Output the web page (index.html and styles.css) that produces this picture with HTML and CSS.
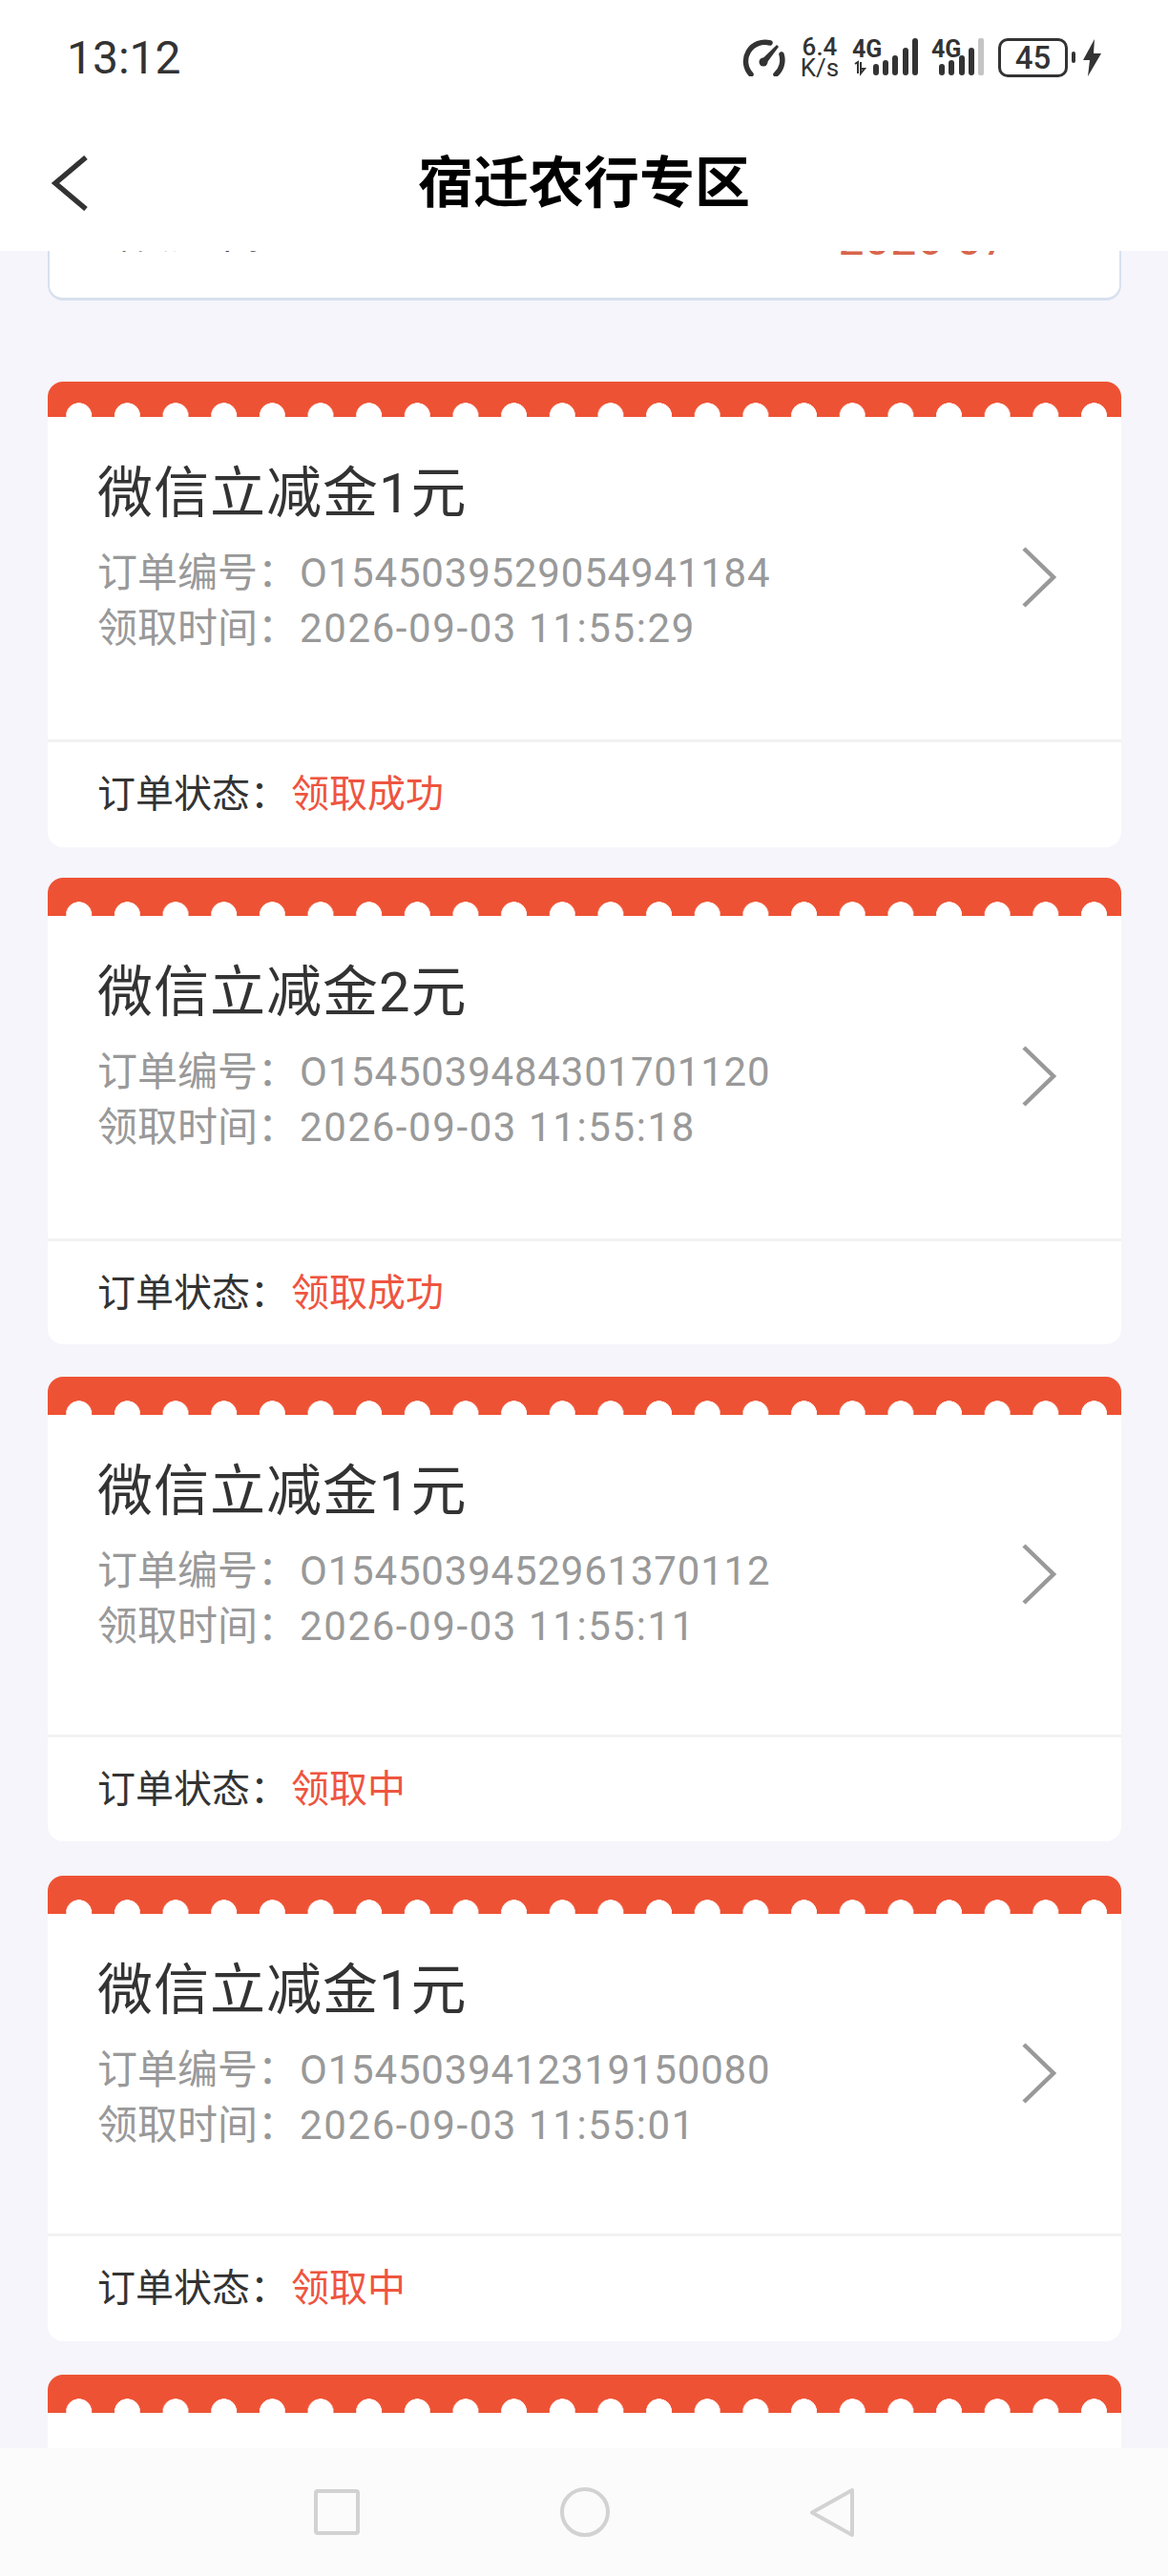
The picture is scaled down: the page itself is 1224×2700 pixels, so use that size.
FILE: index.html
```html
<!DOCTYPE html>
<html lang="zh-CN">
<head>
<meta charset="utf-8">
<title>宿迁农行专区</title>
<link rel="stylesheet" href="styles.css">
</head>
<body>
<div class="screen">
  <header class="topbar">
    <div class="status">
      <span class="time">13:12</span>
      <div class="status-icons">
        <svg class="ic-gauge" width="46" height="40" viewBox="0 0 46 40"><path d="M9 38A20 20 0 0 1 29 5M41 17A20 20 0 0 1 35 38" fill="none" stroke="#333" stroke-width="5.500" stroke-linecap="round"/><circle cx="22" cy="25" r="4.500" fill="#333"/><path d="M19.500 23 36 7l2 2-14 19z" fill="#333"/></svg>
        <div class="speed"><span class="speed-num">6.4</span><span class="speed-unit">K/s</span></div>
        <svg class="ic-sig1" width="70" height="40" viewBox="0 0 70 40"><text x="0" y="20" class="net">4G</text><path d="M3 27l3-2v12M9 25v12l4-5h-4" fill="none" stroke="#333" stroke-width="2"/><g fill="#333"><rect x="22" y="27" width="6" height="12" rx="3"/><rect x="32" y="23" width="6" height="16" rx="3"/><rect x="42" y="18" width="6" height="21" rx="3"/><rect x="53" y="10" width="6" height="29" rx="3"/><rect x="63" y="0" width="6" height="39" rx="3"/></g></svg>
        <svg class="ic-sig2" width="56" height="40" viewBox="0 0 56 40"><text x="0" y="20" class="net">4G</text><g fill="#333"><rect x="8" y="27" width="6" height="12" rx="3"/><rect x="18" y="23" width="6" height="16" rx="3"/><rect x="29" y="18" width="6" height="21" rx="3"/><rect x="39" y="10" width="6" height="29" rx="3"/></g><rect x="49" y="0" width="6" height="39" rx="2" fill="#c4c4c4"/></svg>
        <div class="battery"><span class="battery-body">45</span><span class="battery-nub"></span></div>
        <svg class="ic-bolt" width="19" height="39" viewBox="0 0 19 39"><path d="M12 0 0 22h7L5 39 19 15h-8z" fill="#333"/></svg>
      </div>
    </div>
    <div class="navbar">
      <svg class="back" width="40" height="58" viewBox="0 0 40 58"><path d="M36 2 4 29l32 27" fill="none" stroke="#333" stroke-width="5.500"/></svg>
      <h1 class="title">宿迁农行专区</h1>
    </div>
  </header>

  <main class="list">
    <section class="summary">
      <span class="summary-label">活动时间</span>
      <span class="summary-value">2026-07</span>
    </section>

    <article class="card card-1">
      <div class="ribbon"></div>
      <div class="card-body">
        <div class="info">
          <h2 class="name">微信立减金1元</h2>
          <p class="meta">订单编号：<span class="num">O1545039529054941184</span></p>
          <p class="meta">领取时间：<span class="date">2026-09-03 11:55:29</span></p>
        </div>
        <svg class="chev" width="38" height="64" viewBox="0 0 38 64"><path d="M3 2l31 30L3 62" fill="none" stroke="#999" stroke-width="4.500"/></svg>
      </div>
      <div class="card-foot">订单状态：<span class="state">领取成功</span></div>
    </article>

    <article class="card card-2">
      <div class="ribbon"></div>
      <div class="card-body">
        <div class="info">
          <h2 class="name">微信立减金2元</h2>
          <p class="meta">订单编号：<span class="num">O1545039484301701120</span></p>
          <p class="meta">领取时间：<span class="date">2026-09-03 11:55:18</span></p>
        </div>
        <svg class="chev" width="38" height="64" viewBox="0 0 38 64"><path d="M3 2l31 30L3 62" fill="none" stroke="#999" stroke-width="4.500"/></svg>
      </div>
      <div class="card-foot">订单状态：<span class="state">领取成功</span></div>
    </article>

    <article class="card card-3">
      <div class="ribbon"></div>
      <div class="card-body">
        <div class="info">
          <h2 class="name">微信立减金1元</h2>
          <p class="meta">订单编号：<span class="num">O1545039452961370112</span></p>
          <p class="meta">领取时间：<span class="date">2026-09-03 11:55:11</span></p>
        </div>
        <svg class="chev" width="38" height="64" viewBox="0 0 38 64"><path d="M3 2l31 30L3 62" fill="none" stroke="#999" stroke-width="4.500"/></svg>
      </div>
      <div class="card-foot">订单状态：<span class="state">领取中</span></div>
    </article>

    <article class="card card-4">
      <div class="ribbon"></div>
      <div class="card-body">
        <div class="info">
          <h2 class="name">微信立减金1元</h2>
          <p class="meta">订单编号：<span class="num">O1545039412319150080</span></p>
          <p class="meta">领取时间：<span class="date">2026-09-03 11:55:01</span></p>
        </div>
        <svg class="chev" width="38" height="64" viewBox="0 0 38 64"><path d="M3 2l31 30L3 62" fill="none" stroke="#999" stroke-width="4.500"/></svg>
      </div>
      <div class="card-foot">订单状态：<span class="state">领取中</span></div>
    </article>

    <article class="card card-5">
      <div class="ribbon"></div>
      <div class="card-body"></div>
    </article>
  </main>

  <nav class="sysnav">
    <svg width="48" height="48" viewBox="0 0 48 48"><rect x="2" y="2" width="44" height="44" rx="2" fill="none" stroke="#d2d2d2" stroke-width="4"/></svg>
    <svg width="52" height="52" viewBox="0 0 52 52"><circle cx="26" cy="26" r="24" fill="none" stroke="#d2d2d2" stroke-width="4"/></svg>
    <svg width="46" height="53" viewBox="0 0 46 53"><path d="M44 3v47L2 26.500z" fill="none" stroke="#d2d2d2" stroke-width="4" stroke-linejoin="round"/></svg>
  </nav>
</div>
</body>
</html>
```
FILE: styles.css
```css
* { box-sizing: border-box; }
html, body { margin: 0; padding: 0; }
body {
  width: 1224px;
  height: 2700px;
  overflow: hidden;
  font-family: Roboto, "Noto Sans CJK SC", sans-serif;
  color: #333;
}
.screen {
  width: 1224px;
  height: 2700px;
  display: flex;
  flex-direction: column;
  background: #f5f5fb;
}

/* top bar */
.topbar { flex: none; height: 263px; background: #fff; }
.status {
  height: 120px;
  padding: 2px 70px 0;
  display: flex;
  align-items: center;
  justify-content: space-between;
}
.time { font-size: 48px; line-height: 1; color: #333; }
.status-icons { display: flex; align-items: center; margin-top: -2px; }
.speed {
  width: 38px;
  margin: 0 15px 0 16px;
  display: flex;
  flex-direction: column;
  align-items: center;
  line-height: 22px;
  color: #333;
}
.speed-num { font-size: 26px; font-weight: 500; }
.speed-unit { font-size: 26px; white-space: nowrap; }
.ic-sig1, .ic-sig2 { overflow: visible; }
.net { font-family: Roboto, sans-serif; font-size: 25px; font-weight: 700; fill: #333; }
.ic-sig2 { margin-left: 13px; }
.battery { margin: 0 8px 0 14px; display: flex; align-items: center; gap: 4px; }
.battery-body {
  width: 73px;
  height: 41px;
  border: 3.500px solid #333;
  border-radius: 10px;
  display: flex;
  align-items: center;
  justify-content: center;
  font-size: 33px;
  font-weight: 500;
  line-height: 1;
}
.battery-nub { width: 4px; height: 12px; background: #333; border-radius: 2px; }

.navbar {
  height: 143px;
  padding-left: 54px;
  display: flex;
  align-items: center;
  position: relative;
}
.title {
  position: absolute;
  left: 0;
  right: 0;
  margin: 0;
  text-align: center;
  font-size: 58px;
  font-weight: 700;
  color: #000;
  line-height: 1;
}

/* scrolled list */
.list { flex: 1; min-height: 0; overflow: hidden; }
.summary {
  height: 112px;
  margin: -60px 49px 0 50px;
  padding: 14px 116px 0 61px;
  background: #fff;
  border: 2px solid #d8e0ee;
  border-bottom-width: 3px;
  border-radius: 16px;
  display: flex;
  justify-content: space-between;
  font-size: 40px;
  line-height: 56px;
  color: #444;
}
.summary-value { color: #d8654c; font-size: 48px; letter-spacing: 0.500px; margin-top: 4px; }

.card {
  margin: 0 49px 0 50px;
  background: #fff;
  border-radius: 16px;
  overflow: hidden;
}
.ribbon {
  height: 40px;
  background-color: #ee5234;
  background-image: radial-gradient(circle 13.700px at 25.330px 13.700px, #fff 13.200px, transparent 13.700px);
  background-size: 50.667px 28px;
  background-repeat: repeat-x;
  background-position: 7.400px 25px;
}
.card-body {
  padding: 38px 32px 0 52px;
  display: flex;
  align-items: center;
  justify-content: space-between;
}
.info { align-self: flex-start; }
.name { margin: 0 0 13px; font-size: 58px; font-weight: 400; line-height: 84px; letter-spacing: 1px; color: #333; }
.meta { margin: 0; font-size: 42px; line-height: 58px; color: #999; white-space: nowrap; }
.num { letter-spacing: 0.800px; margin-left: 2px; }
.date { letter-spacing: 1.600px; margin-left: 2px; }
.chev { flex: none; margin-top: -40px; margin-right: 35px; }
.card-foot {
  padding-left: 52px;
  border-top: 3px solid #f2f2f4;
  font-size: 40px;
  line-height: 56px;
  padding-top: 27px;
  color: #333;
}
.state { color: #ee5540; margin-left: 3px; }

.card-1 { margin-top: 85px; }
.card-1 .ribbon { height: 37px; background-position: 7.400px 22px; }
.card-1 .card-body { height: 338px; }
.card-1 .card-foot { height: 113px; }
.card-2 { margin-top: 32px; }
.card-2 .card-body { height: 338px; }
.card-2 .card-foot { height: 111px; }
.card-3 { margin-top: 34px; }
.card-3 .card-body { height: 335px; }
.card-3 .card-foot { height: 112px; }
.card-4 { margin-top: 36px; }
.card-4 .card-body { height: 335px; }
.card-4 .card-foot { height: 113px; }
.card-5 { margin-top: 35px; }
.card-5 .card-body { height: 335px; }

/* system nav */
.sysnav {
  flex: none;
  height: 134px;
  background: #fbfbfc;
  display: flex;
  align-items: center;
  justify-content: center;
  gap: 210px;
}
```
